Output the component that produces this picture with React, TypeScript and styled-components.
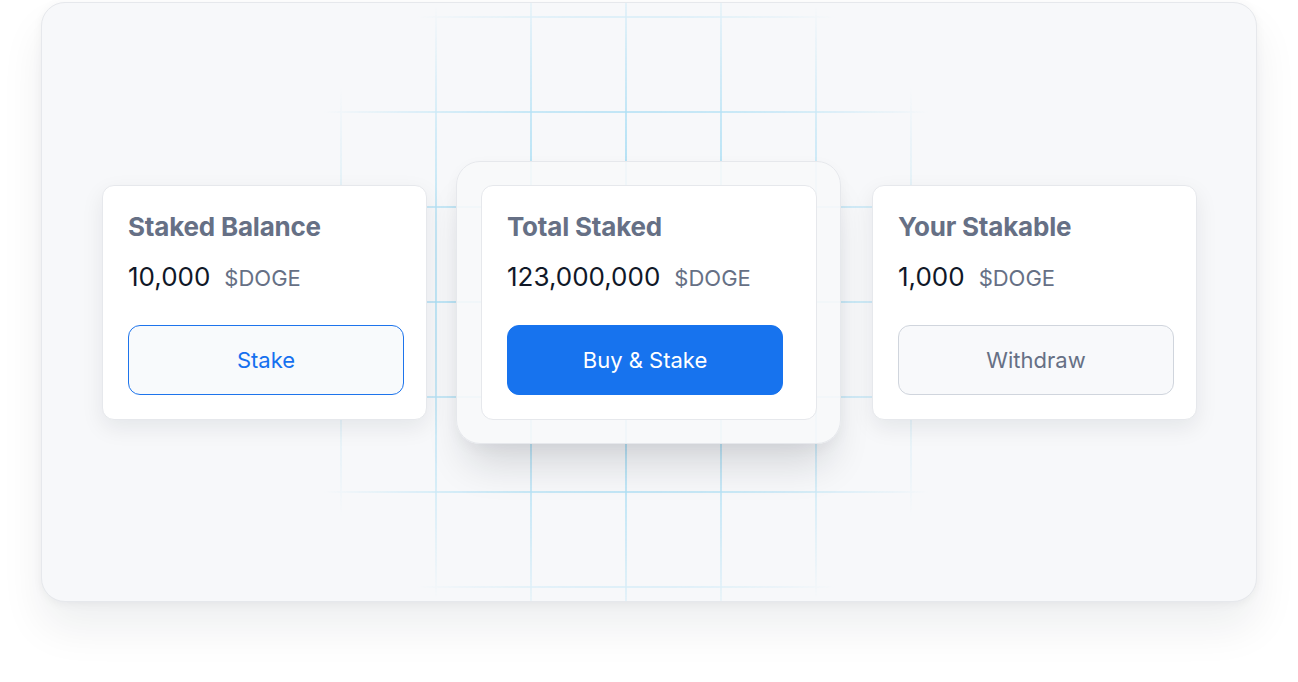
import styled, { createGlobalStyle } from 'styled-components'

const GlobalStyle = createGlobalStyle`
  html, body {
    margin: 0;
    background: #ffffff;
    font-family: Inter, "Noto Sans", "Liberation Sans", sans-serif;
    -webkit-font-smoothing: antialiased;
  }
`

const Page = styled.div`
  padding: 2px 41px 80px;
`

const Panel = styled.section`
  position: relative;
  overflow: hidden;
  box-sizing: border-box;
  height: 600px;
  border: 1.5px solid #e6e8ec;
  border-radius: 24px;
  background: #f7f8fa;
  box-shadow: 0 26px 44px rgba(16, 24, 40, 0.07), 0 2px 10px rgba(16, 24, 40, 0.05);
  display: flex;
  align-items: center;
  justify-content: center;
`

// light blueprint grid behind the cards, fading out from the middle
const Grid = styled.div`
  position: absolute;
  left: 203px;
  top: -82px;
  width: 762px;
  height: 762px;
  background-image:
    linear-gradient(to right, rgba(140, 212, 242, 0.7) 2px, transparent 2px),
    linear-gradient(to bottom, rgba(140, 212, 242, 0.7) 2px, transparent 2px);
  background-size: 95px 95px;
  -webkit-mask-image: radial-gradient(ellipse 360px 350px at center, #000 30%, rgba(0, 0, 0, 0.5) 70%, transparent 100%);
  mask-image: radial-gradient(ellipse 360px 350px at center, #000 30%, rgba(0, 0, 0, 0.5) 70%, transparent 100%);
  pointer-events: none;
`

const Row = styled.div`
  position: relative;
  display: flex;
  align-items: center;
  margin-left: 1px;
`

const Frame = styled.div`
  box-sizing: border-box;
  margin: 0 31px 0 29px;
  padding: 23px 23px 23px 24px;
  border: 1.5px solid #e6e8ec;
  border-radius: 24px;
  background: rgba(247, 248, 249, 0.9);
  box-shadow: 0 30px 40px -12px rgba(16, 24, 40, 0.16), 0 4px 14px rgba(16, 24, 40, 0.04);
`

const Card = styled.div<{ $width: number; $flat?: boolean }>`
  box-sizing: border-box;
  width: ${p => p.$width}px;
  height: 235px;
  padding: 24px 25px;
  border: 1.5px solid #e6e8ec;
  border-radius: 12px;
  background: #ffffff;
  box-shadow: ${p => (p.$flat ? 'none' : '0 8px 22px rgba(16, 24, 40, 0.08)')};
  display: flex;
  flex-direction: column;
`

const Title = styled.h3`
  margin: 0;
  font-size: 26px;
  line-height: 34px;
  font-weight: 700;
  color: #667085;
  letter-spacing: -0.2px;
`

const Amount = styled.div`
  margin-top: 16px;
  display: flex;
  align-items: baseline;
  gap: 14px;
  line-height: 34px;
`

const Value = styled.span`
  font-size: 26px;
  color: #101828;
`

const Ticker = styled.span`
  font-size: 22px;
  color: #667085;
`

const ButtonVariant = {
  outline: 'border: 1.5px solid #1d74ec; background: #f8fafc; color: #1570ef;',
  solid: 'border: 1.5px solid #1773ee; background: #1773ee; color: #ffffff;',
  muted: 'border: 1.5px solid #d0d5dd; background: #f8f9fb; color: #667085;',
}

const Button = styled.button<{ $variant: keyof typeof ButtonVariant }>`
  box-sizing: border-box;
  margin-top: 30px;
  width: 276px;
  height: 70px;
  border-radius: 12px;
  font-family: inherit;
  font-size: 22px;
  font-weight: 400;
  cursor: pointer;
  ${p => ButtonVariant[p.$variant]}
`

type StatProps = {
  title: string
  value: string
  action: string
  variant: keyof typeof ButtonVariant
  width: number
  flat?: boolean
}

function StatCard({ title, value, action, variant, width, flat }: StatProps) {
  return (
    <Card $width={width} $flat={flat}>
      <Title>{title}</Title>
      <Amount>
        <Value>{value}</Value>
        <Ticker>$DOGE</Ticker>
      </Amount>
      <Button $variant={variant}>{action}</Button>
    </Card>
  )
}

export default function App() {
  return (
    <>
      <GlobalStyle />
      <Page>
        <Panel>
          <Grid />
          <Row>
            <StatCard title="Staked Balance" value="10,000" action="Stake" variant="outline" width={325} />
            <Frame>
              <StatCard title="Total Staked" value="123,000,000" action="Buy & Stake" variant="solid" width={336} flat />
            </Frame>
            <StatCard title="Your Stakable" value="1,000" action="Withdraw" variant="muted" width={325} />
          </Row>
        </Panel>
      </Page>
    </>
  )
}
